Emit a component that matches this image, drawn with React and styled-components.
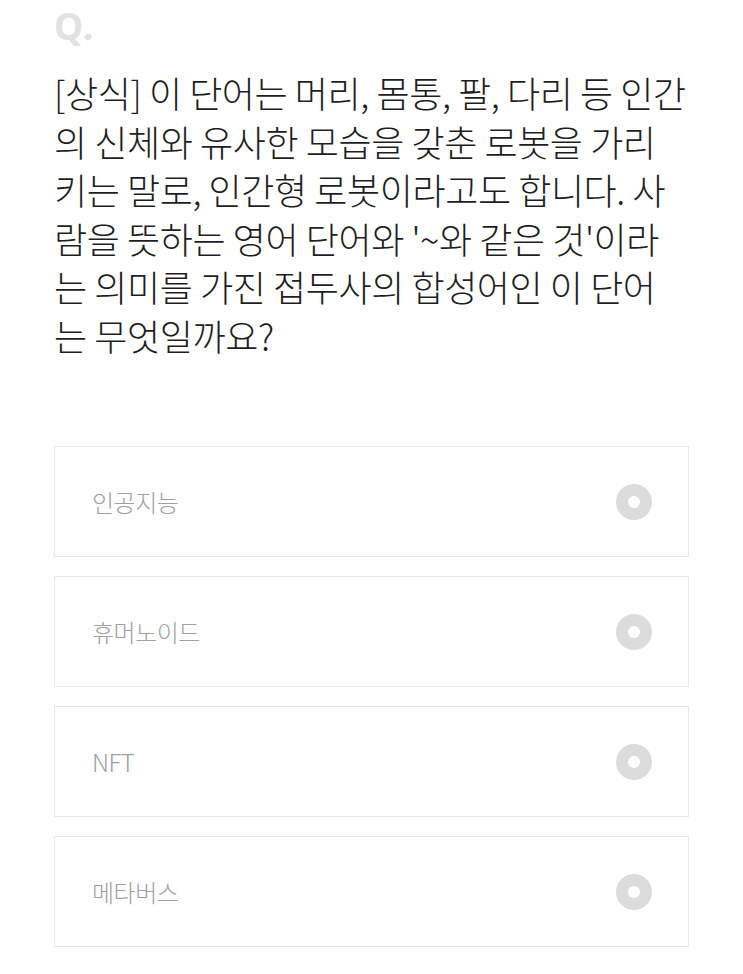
import React from 'react';
import styled, { createGlobalStyle } from 'styled-components';

const GlobalStyle = createGlobalStyle`
  body {
    margin: 0;
    background: #fff;
    font-family: "Noto Sans CJK KR", "Noto Sans", sans-serif;
  }
`;

const Page = styled.div`
  padding: 6px 54px 0 54px;
`;

const QMark = styled.div`
  font-family: "Noto Sans", sans-serif;
  font-weight: 700;
  font-size: 37px;
  line-height: 40px;
  color: #e2e2e2;
  letter-spacing: 1px;
`;

const Question = styled.div`
  margin-top: 22px;
  font-size: 36px;
  font-weight: 300;
  line-height: 48.5px;
  color: #1e1e1e;
  letter-spacing: -0.4px;
`;

const Line = styled.div`
  white-space: nowrap;
`;

const Options = styled.div`
  margin-top: 87px;
  display: flex;
  flex-direction: column;
  gap: 19px;
`;

const Option = styled.div`
  box-sizing: border-box;
  height: 111px;
  border: 1px solid #e8e8e8;
  display: flex;
  align-items: center;
  justify-content: space-between;
  padding: 0 36px 0 37px;
`;

const Label = styled.span`
  font-size: 24px;
  font-weight: 300;
  color: #a0a0a0;
  letter-spacing: -0.5px;
`;

const Radio = styled.span`
  width: 36px;
  height: 36px;
  border-radius: 50%;
  background: #dcdcdc;
  display: flex;
  align-items: center;
  justify-content: center;
  &::after {
    content: '';
    width: 12px;
    height: 12px;
    border-radius: 50%;
    background: #fff;
  }
`;

const lines = [
  '[상식] 이 단어는 머리, 몸통, 팔, 다리 등 인간',
  '의 신체와 유사한 모습을 갖춘 로봇을 가리',
  '키는 말로, 인간형 로봇이라고도 합니다. 사',
  "람을 뜻하는 영어 단어와 '~와 같은 것'이라",
  '는 의미를 가진 접두사의 합성어인 이 단어',
  '는 무엇일까요?',
];

const choices = ['인공지능', '휴머노이드', 'NFT', '메타버스'];

const App = () => (
  <>
    <GlobalStyle />
    <Page>
      <QMark>Q.</QMark>
      <Question>
        {lines.map((l, i) => (
          <Line key={i}>{l}</Line>
        ))}
      </Question>
      <Options>
        {choices.map((c) => (
          <Option key={c}>
            <Label>{c}</Label>
            <Radio />
          </Option>
        ))}
      </Options>
    </Page>
  </>
);

export default App;
